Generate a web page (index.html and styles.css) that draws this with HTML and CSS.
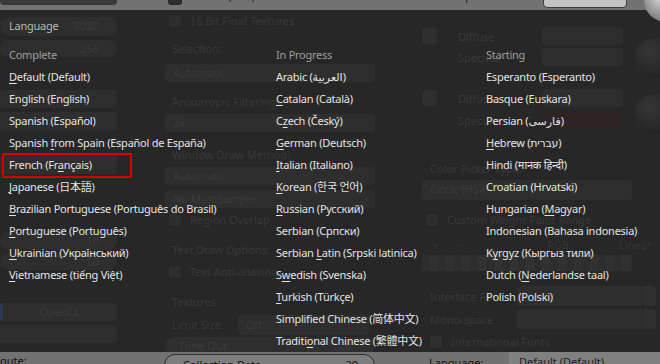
FILE: index.html
```html
<!DOCTYPE html>
<html lang="en">
<head>
  <meta charset="UTF-8" />
  <title>User Preferences - Language</title>
  <link rel="stylesheet" href="styles.css">
</head>
<body>

<div class="screen">

  <div class="topbar">
    <span class="top-drop"></span>
    <span class="check top-check"></span>
    <span class="top-label">GPU Mipmap Generation</span>
    <span class="top-spec">Specular:</span>
    <span class="top-field"></span>
  </div>

  <div class="prefs">
    <div class="col col-left">
      <div class="field num f8080">8080</div>
      <div class="field num f256">256</div>
      <div class="field drop fa"></div>
      <div class="field fb"></div>
      <div class="field drop fc"></div>
      <div class="field num fd">10</div>
      <div class="field num fe">50</div>
      <div class="field split ff"><span class="blue"></span><span>OpenCL</span></div>
      <div class="field drop fg"></div>
    </div>

    <div class="col col-mid">
      <div class="row r-float"><span class="check"></span>16 Bit Float Textures</div>
      <div class="row label r-sel">Selection:</div>
      <div class="field wide w-auto1">Automatic</div>
      <div class="row label r-aniso">Anisotropic Filtering</div>
      <div class="field wide w-2x">2x</div>
      <div class="row label r-window">Window Draw Method:</div>
      <div class="field wide w-auto2">Automatic</div>
      <div class="field wide w-multi">No MultiSample</div>
      <div class="row r-overlap"><span class="check"></span>Region Overlap</div>
      <div class="row label r-textdraw">Text Draw Options:</div>
      <div class="row r-aa"><span class="check"></span>Text Anti-aliasing</div>
      <div class="row label r-tex">Textures:</div>
      <div class="row label r-limit">Limit Size: <span class="field small">Off</span></div>
      <div class="field wide pill">Time Out: <span>120</span></div>
    </div>

    <div class="col col-right">
      <div class="mat m1"><span class="swatch"></span><span>Diffuse:</span><span class="field color"></span></div>
      <div class="mat m2"><span></span><span>Specular:</span><span class="field color"></span></div>
      <div class="mat m3"><span class="swatch"></span><span>Diffuse:</span><span class="field color"></span></div>
      <div class="mat m4"><span></span><span>Specular:</span><span class="field color red"></span></div>
      <div class="row label r-picker">Color Picker Type:</div>
      <div class="field wide w-circle">Circle (HSV)</div>
      <div class="row r-weight"><span class="check"></span>Custom Weight Paint Range</div>
      <div class="row ramp"><span>+</span><span>−</span><span>−</span><span class="rgb">RGB</span><span class="lin">Linear</span></div>
      <div class="checker"></div>
      <div class="font-row fr1"><span>Interface Font:</span><span class="field"></span><span class="field btn"></span></div>
      <div class="font-row fr2"><span>Mono-space</span><span class="field"></span><span class="field btn"></span></div>
      <div class="row r-intl"><span class="check"></span>International Fonts</div>
    </div>

    <div class="col col-spheres">
      <span class="sphere s2"></span>
      <span class="sphere s3"></span>
    </div>
  </div>

  <div class="bottombar">
    <span class="bot-label">oute:</span>
    <span class="bot-button">Collection Data...<span>20</span></span>
    <span class="bot-lang">Language:</span>
    <span class="bot-drop">Default (Default)</span>
  </div>

  <span class="sphere s1"></span>

  <div class="menu">
    <div class="menu-title">Language</div>
    <div class="menu-cols">
      <ul class="menu-col c1">
        <li class="head">Complete</li>
        <li><u>D</u>efault (Default)</li>
        <li>English (English)</li>
        <li>Spanish (Español)</li>
        <li>Spanish <u>f</u>rom Spain (Español de España)</li>
        <li class="picked">French (Fr<u>a</u>nçais)</li>
        <li><u>J</u>apanese (日本語)</li>
        <li><u>B</u>razilian Portuguese (Português do Brasil)</li>
        <li><u>P</u>ortuguese (Português)</li>
        <li><u>U</u>krainian (Український)</li>
        <li><u>V</u>ietnamese (tiếng Việt)</li>
      </ul>
      <ul class="menu-col c2">
        <li class="head">In Progress</li>
        <li>Arabic (العربية)</li>
        <li><u>C</u>atalan (Català)</li>
        <li>C<u>z</u>ech (Český)</li>
        <li><u>G</u>erman (Deutsch)</li>
        <li><u>I</u>talian (Italiano)</li>
        <li><u>K</u>orean (한국 언어)</li>
        <li><u>R</u>ussian (Русский)</li>
        <li>Serbian (Српски)</li>
        <li>Serbian <u>L</u>atin (Srpski latinica)</li>
        <li>S<u>w</u>edish (Svenska)</li>
        <li><u>T</u>urkish (Türkçe)</li>
        <li>Simplified Chinese (简体中文)</li>
        <li>Traditi<u>o</u>nal Chinese (繁體中文)</li>
      </ul>
      <ul class="menu-col c3">
        <li class="head">Starting</li>
        <li>Esperanto (Esperanto)</li>
        <li>Basque (Euskara)</li>
        <li>Persian (فارسی)</li>
        <li><u>H</u>ebrew (עברית)</li>
        <li>Hindi (मानक हिन्दी)</li>
        <li>Croatian (Hrvatski)</li>
        <li>Hungarian (<u>M</u>agyar)</li>
        <li>Indonesian (Bahasa indonesia)</li>
        <li>K<u>y</u>rgyz (Кыргыз тили)</li>
        <li>Dutch (<u>N</u>ederlandse taal)</li>
        <li>Polish (Polski)</li>
      </ul>
    </div>
  </div>

</div>

</body>
</html>
```

FILE: styles.css
```css
html, body {
  margin: 0;
  padding: 0;
}

body {
  font-family: 'Noto Sans', 'DejaVu Sans', 'Noto Sans CJK JP', sans-serif;
  font-size: 11px;
  background: #272727;
}

.screen {
  position: relative;
  width: 660px;
  height: 364px;
  overflow: hidden;
  display: flex;
  flex-direction: column;
}

/* strip of the preferences window above the menu */
.topbar {
  height: 10px;
  background: #727272;
  display: flex;
  align-items: flex-start;
  color: #1a1a1a;
  overflow: hidden;
  flex-shrink: 0;
  white-space: nowrap;
}

.top-drop {
  width: 117px;
  height: 5px;
  background: #3a3a3a;
  border-radius: 0 0 4px 4px;
}

.top-check {
  margin: -9px 0 0 51px;
  background: #5a5a5a;
  border-color: #444;
}

.top-label {
  margin: -12px 0 0 8px;
  line-height: 14px;
}

.top-spec {
  margin: -11px 0 0 140px;
  line-height: 14px;
}

.top-field {
  margin: -10px 0 0 36px;
  width: 82px;
  height: 16px;
  border: 1px solid #3c3c3c;
  border-radius: 4px;
  background: #c4c4c4;
}

/* dimmed panel behind the menu */
.prefs {
  height: 342px;
  display: flex;
  color: #393939;
  flex-shrink: 0;
  white-space: nowrap;
}

.col {
  display: flex;
  flex-direction: column;
  flex-shrink: 0;
}

.field {
  height: 18px;
  line-height: 18px;
  background: #2e2e2e;
  border-radius: 4px;
  box-sizing: border-box;
  padding: 0 8px;
  color: #3b3b3b;
}

.col-left {
  width: 117px;
}

.field.num {
  text-align: right;
  padding-right: 18px;
  border-radius: 9px;
}

.f8080 { margin-top: 7px; height: 19px; }
.f256 { margin-top: 4px; height: 17px; line-height: 17px; }
.fa { margin-top: 33px; }
.fb { margin-top: 4px; height: 19px; }
.fc { margin-top: 23px; height: 20px; }
.fd { margin-top: 58px; }
.fe { margin-top: 3px; height: 17px; line-height: 17px; }
.ff { margin-top: 33px; }
.fg { margin-top: 4px; }

.field.split {
  display: flex;
  padding: 0;
}

.field.split .blue {
  width: 3px;
  background: #2a3a52;
  border-radius: 4px 0 0 4px;
}

.field.split span:last-child {
  flex: 1;
  text-align: center;
}

.col-mid {
  width: 210px;
  margin-left: 48px;
}

.row {
  height: 20px;
  line-height: 20px;
  display: flex;
  align-items: center;
  gap: 8px;
}

.label {
  padding-left: 7px;
}

.check {
  width: 12px;
  height: 12px;
  border-radius: 3px;
  background: #2e2e2e;
  border: 1px solid #252525;
  flex-shrink: 0;
}

.r-float { margin-top: 1px; padding-left: 3px; }
.r-sel { margin-top: 8px; }
.w-auto1 { margin-top: 5px; }
.r-aniso { margin-top: 10px; }
.w-2x { margin-top: 2px; }
.r-window { margin-top: 13px; }
.w-auto2 { margin-top: 2px; }
.w-multi { margin-top: 5px; }
.r-overlap { margin-top: 2px; padding-left: 3px; }
.r-textdraw { margin-top: 10px; }
.r-aa { margin-top: 2px; padding-left: 3px; }
.r-tex { margin-top: 10px; }
.r-limit { margin-top: 3px; gap: 0; }
.r-limit .field.small {
  width: 132px;
  height: 20px;
  margin-left: 14px;
  line-height: 20px;
}

.field.pill {
  height: 18px;
  margin-top: 2px;
  border-radius: 9px;
  display: flex;
  justify-content: space-between;
  padding: 0 24px 0 14px;
}

.col-right {
  width: 210px;
  margin-left: 47px;
}

.mat {
  display: grid;
  grid-template-columns: 36px 84px 81px;
  align-items: center;
  height: 18px;
}

.m1 { margin-top: 17px; }
.m2 { margin-top: 3px; }
.m3 { margin-top: 23px; }
.m4 { margin-top: 4px; }

.swatch {
  width: 15px;
  height: 16px;
  border-radius: 3px;
  background: #2f2f2f;
}

.field.red {
  background: #2e2424;
}

.r-picker { margin-top: 30px; padding-left: 8px; }
.w-circle { margin-top: 1px; height: 20px; }
.r-weight { margin-top: 10px; padding-left: 3px; }
.ramp {
  margin-top: 5px;
  padding-left: 10px;
  gap: 20px;
  color: #353535;
}
.ramp .rgb { margin-left: 36px; }
.ramp .lin { margin-left: 30px; }

.checker {
  height: 16px;
  margin-top: 0;
  background: repeating-linear-gradient(90deg, #2d2d2d 0 8px, #323232 8px 16px);
}

.font-row {
  display: grid;
  grid-template-columns: 87px 127px 12px;
  align-items: center;
  height: 20px;
  padding-left: 8px;
}

.fr1 { margin-top: 15px; }
.fr2 { margin-top: 3px; }

.font-row .field {
  height: 20px;
}

.font-row .btn {
  padding: 0;
  border-radius: 0 4px 4px 0;
  background: #313131;
}

.r-intl { margin-top: 3px; padding-left: 7px; }

.col-spheres {
  flex: 1;
  align-items: flex-end;
  padding-top: 28px;
  gap: 16px;
}

.sphere {
  width: 40px;
  height: 40px;
  border-radius: 50%;
  margin-right: -14px;
  background: radial-gradient(circle at 40% 35%, #363636, #252525 70%);
}

.sphere.s1 {
  position: absolute;
  right: -14px;
  top: -22px;
  width: 44px;
  height: 44px;
  background: radial-gradient(circle at 40% 45%, #d8d8d8, #7a7a7a 65%, #5a5a5a);
}

/* strip of the preferences window below the menu */
.bottombar {
  flex: 1;
  background: #727272;
  color: #111;
  display: flex;
  align-items: flex-start;
  overflow: hidden;
  line-height: 14px;
  white-space: nowrap;
}

.bot-label {
  width: 164px;
  margin-top: 2px;
}

.bot-button {
  width: 211px;
  height: 22px;
  margin-top: 2px;
  border: 1px solid #2e2e2e;
  border-radius: 11px;
  background: #7e7e7e;
  display: flex;
  justify-content: space-between;
  padding: 3px 16px 0 18px;
  box-sizing: border-box;
}

.bot-lang {
  margin: 4px 0 0 54px;
  width: 80px;
}

.bot-drop {
  flex: 1;
  height: 12px;
  background: #808080;
  color: #222;
  padding: 3px 0 0 10px;
}

/* the language menu */
.menu {
  position: absolute;
  left: 2px;
  top: 10px;
  width: 626px;
  height: 342px;
  border-radius: 4px;
  padding: 5px 0 0 7px;
  box-sizing: border-box;
  color: #e4e4e4;
  letter-spacing: -0.25px;
}

.menu-title {
  line-height: 22px;
  color: #b8b8b8;
}

.menu-cols {
  display: flex;
  margin-top: 7px;
}

.menu-col {
  list-style: none;
  margin: 0;
  padding: 0;
  flex-shrink: 0;
}

.menu-col li {
  line-height: 22px;
  height: 22px;
  white-space: nowrap;
}

.menu-col .head {
  color: #9e9e9e;
}

.c1 { width: 267px; }
.c2 { width: 210px; }

u {
  text-decoration-thickness: 1px;
  text-underline-offset: 2px;
}

.picked {
  position: relative;
}

.picked::after {
  content: "";
  position: absolute;
  left: -7px;
  top: -1px;
  width: 130px;
  height: 25px;
  border: 2px solid #d40000;
  box-sizing: border-box;
}
```
